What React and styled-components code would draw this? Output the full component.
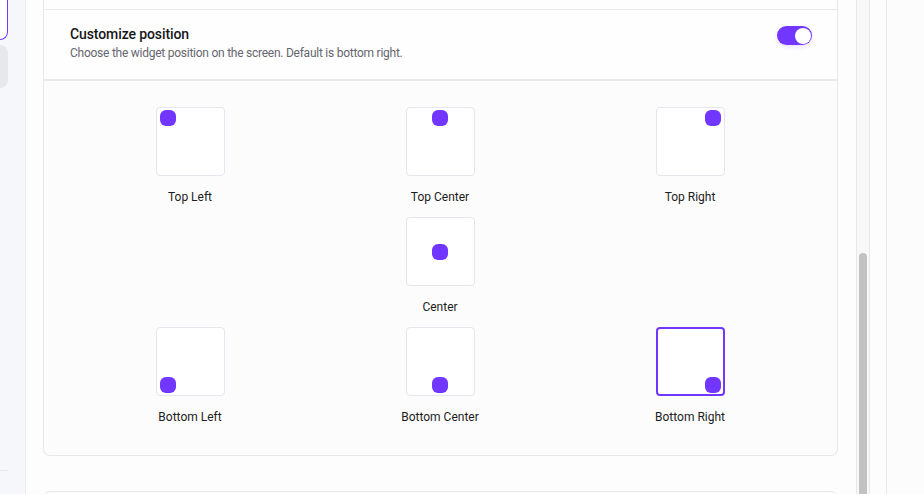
import React, { useState } from 'react'
import styled, { createGlobalStyle } from 'styled-components'

const positions = [
  { key: 'tl', label: 'Top Left', v: 'flex-start', h: 'flex-start' },
  { key: 'tc', label: 'Top Center', v: 'flex-start', h: 'center' },
  { key: 'tr', label: 'Top Right', v: 'flex-start', h: 'flex-end' },
  { key: 'e1', empty: true },
  { key: 'c', label: 'Center', v: 'center', h: 'center' },
  { key: 'e2', empty: true },
  { key: 'bl', label: 'Bottom Left', v: 'flex-end', h: 'flex-start' },
  { key: 'bc', label: 'Bottom Center', v: 'flex-end', h: 'center' },
  { key: 'br', label: 'Bottom Right', v: 'flex-end', h: 'flex-end' },
]

const App = () => {
  const [selected, setSelected] = useState('br')
  const [enabled, setEnabled] = useState(true)

  return (
    <>
      <GlobalStyle />
      <Page>
        <Sidebar>
          <NavItem active />
          <NavItem />
          <SideFooter />
        </Sidebar>
        <Main>
          <Content>
            <Card>
              <PrevRow />
              <HeaderRow>
                <HeaderText>
                  <Title>Customize position</Title>
                  <Description>Choose the widget position on the screen. Default is bottom right.</Description>
                </HeaderText>
                <Toggle on={enabled} onClick={() => setEnabled(!enabled)}>
                  <Knob />
                </Toggle>
              </HeaderRow>
              <PositionGrid>
                {positions.map((p) =>
                  p.empty ? (
                    <span key={p.key} />
                  ) : (
                    <Option key={p.key} onClick={() => setSelected(p.key)}>
                      <PreviewBox selected={selected === p.key} v={p.v} h={p.h}>
                        <Dot />
                      </PreviewBox>
                      <OptionLabel>{p.label}</OptionLabel>
                    </Option>
                  )
                )}
              </PositionGrid>
            </Card>
            <NextCard />
          </Content>
          <ScrollTrack>
            <ScrollThumb />
          </ScrollTrack>
        </Main>
        <Gutter />
        <RightPanel />
      </Page>
    </>
  )
}

export default App

const GlobalStyle = createGlobalStyle`
  body {
    margin: 0;
    font-family: Roboto, "Noto Sans", sans-serif;
    background: #fdfdfd;
    color: #1a1a1f;
  }
`;

const Page = styled.div`
  display: flex;
  height: 100vh;
  overflow: hidden;
`;

const Sidebar = styled.div`
  width: 25px;
  flex-shrink: 0;
  background: #f5f7fa;
  border-right: 1px solid #e9ebf0;
  display: flex;
  flex-direction: column;
  gap: 5px;
`;

const NavItem = styled.div`
  width: 8px;
  height: ${(props) => (props.active ? '40px' : '43px')};
  box-sizing: border-box;
  background: ${(props) => (props.active ? '#ffffff' : '#e8e8ec')};
  border: ${(props) => (props.active ? '1px solid #7136ff' : 'none')};
  border-left: none;
  border-top: none;
  border-radius: ${(props) => (props.active ? '0 0 8px 0' : '0 8px 8px 0')};
`;

const SideFooter = styled.div`
  margin-top: auto;
  margin-bottom: 23px;
  width: 8px;
  border-top: 1px solid #e4e6eb;
`;

const Main = styled.div`
  width: 844px;
  flex-shrink: 0;
  display: flex;
  background: #fdfdfd;
`;

const Content = styled.div`
  flex: 1;
  padding: 0 18px 0 17px;
  display: flex;
  flex-direction: column;
  gap: 35px;
`;

const Card = styled.div`
  border: 1px solid #e7e7ec;
  border-top: none;
  border-radius: 0 0 7px 7px;
  background: #fcfcfd;
  flex-shrink: 0;
`;

const PrevRow = styled.div`
  height: 9px;
  background: #fefefe;
  border-bottom: 1px solid #ececf0;
`;

const HeaderRow = styled.div`
  height: 71px;
  box-sizing: border-box;
  padding: 14px 25px 0 26px;
  display: flex;
  justify-content: space-between;
  align-items: flex-start;
  background: #fefefe;
  border-bottom: 2px solid #e9e9ee;
`;

const HeaderText = styled.div`
  display: flex;
  flex-direction: column;
`;

const Title = styled.div`
  font-size: 14px;
  line-height: 20px;
  font-weight: 500;
  color: #16161a;
  letter-spacing: -0.1px;
`;

const Description = styled.div`
  font-size: 12px;
  line-height: 18px;
  color: #66666e;
  letter-spacing: -0.25px;
`;

const Toggle = styled.button`
  margin-top: 2px;
  width: 35px;
  height: 19px;
  padding: 0 1.5px;
  border: none;
  border-radius: 10px;
  background: ${(props) => (props.on ? '#7136ff' : '#d6d6dc')};
  display: flex;
  align-items: center;
  justify-content: ${(props) => (props.on ? 'flex-end' : 'flex-start')};
  cursor: pointer;
  box-shadow: 0 2px 4px rgba(113, 54, 255, 0.15);
`;

const Knob = styled.span`
  width: 16px;
  height: 16px;
  border-radius: 50%;
  background: #ffffff;
`;

const PositionGrid = styled.div`
  display: grid;
  grid-template-columns: repeat(3, 250px);
  row-gap: 12px;
  padding: 26px 21px 30px;
`;

const Option = styled.div`
  display: flex;
  flex-direction: column;
  align-items: center;
  gap: 13px;
  cursor: pointer;
`;

const PreviewBox = styled.div`
  width: 69px;
  height: 69px;
  box-sizing: border-box;
  background: #ffffff;
  border-radius: 4px;
  border: ${(props) => (props.selected ? '2px solid #7136ff' : '1px solid #e6e6ec')};
  padding: ${(props) => (props.selected ? '1px 2px' : '2px 3px')};
  display: flex;
  align-items: ${(props) => props.v};
  justify-content: ${(props) => props.h};
`;

const Dot = styled.span`
  width: 16px;
  height: 16px;
  border-radius: 6px;
  background: #7136ff;
`;

const OptionLabel = styled.div`
  font-size: 12px;
  line-height: 16px;
  color: #1c1c20;
`;

const NextCard = styled.div`
  height: 60px;
  border: 1px solid #e7e7ec;
  border-radius: 7px;
  background: #fcfcfd;
  flex-shrink: 0;
`;

const ScrollTrack = styled.div`
  width: 12px;
  flex-shrink: 0;
  background: #f8f8f8;
  border-left: 1px solid #e8e8ec;
  border-right: 1px solid #e8e8ec;
  display: flex;
  justify-content: center;
  padding-top: 253px;
`;

const ScrollThumb = styled.div`
  width: 8px;
  height: 300px;
  border-radius: 4px;
  background: #c2c2c2;
`;

const Gutter = styled.div`
  width: 16px;
  flex-shrink: 0;
  background: #fdfdfd;
  border-right: 1px solid #e8e8ec;
`;

const RightPanel = styled.div`
  flex: 1;
  background: #fcfcfd;
`;
